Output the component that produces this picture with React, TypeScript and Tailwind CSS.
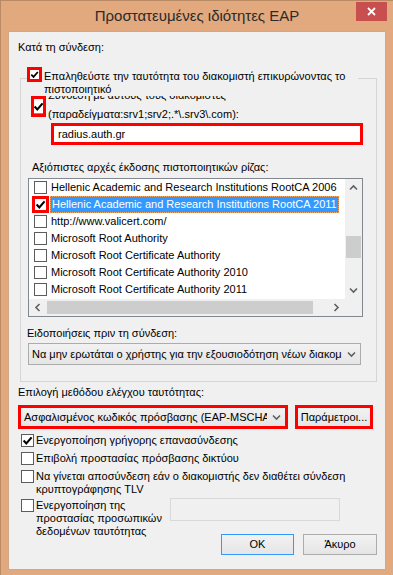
import React from 'react'

const Check = () => (
  <svg width="11" height="11" viewBox="0 0 11 11" className="block">
    <path d="M1.6 5.6 L4.3 8.4 L9.6 2.4" fill="none" stroke="#000" strokeWidth="2.1" />
  </svg>
)

const Chevron = ({ dir = 'down' }: { dir?: 'down' | 'up' | 'left' | 'right' }) => {
  const d = {
    down: 'M1 2.5 L4.5 6 L8 2.5',
    up: 'M1 6.5 L4.5 3 L8 6.5',
    left: 'M6.5 1 L3 4.5 L6.5 8',
    right: 'M2.5 1 L6 4.5 L2.5 8',
  }[dir]
  return (
    <svg width="9" height="9" viewBox="0 0 9 9" className="block">
      <path d={d} fill="none" stroke="#606060" strokeWidth="1.6" />
    </svg>
  )
}

const Box = ({ checked }: { checked?: boolean }) => (
  <span className="flex h-[13px] w-[13px] shrink-0 items-center justify-center border border-[#5c5c5c] bg-white">
    {checked && <Check />}
  </span>
)

const certs = [
  'Hellenic Academic and Research Institutions RootCA 2006',
  'Hellenic Academic and Research Institutions RootCA 2011',
  'http://www.valicert.com/',
  'Microsoft Root Authority',
  'Microsoft Root Certificate Authority',
  'Microsoft Root Certificate Authority 2010',
  'Microsoft Root Certificate Authority 2011',
]

const App = () => {
  return (
    <div className="flex h-[575px] w-[393px] flex-col overflow-hidden border-l border-t border-[#b98a64] bg-[#e2a87e] font-['Liberation_Sans',Arial,sans-serif] text-[11px] leading-[13px] text-black">
      {/* Title bar */}
      <div className="grid h-[30px] shrink-0 grid-cols-[1fr_auto_1fr]">
        <div />
        <div className="pt-[6px] text-[15px] leading-[18px] text-[#2b2b2b]">Προστατευμένες ιδιότητες EAP</div>
        <div className="flex justify-end pr-[6px] pt-[1px]">
          <div className="flex h-[19px] w-[31px] items-center justify-center bg-[#c7504f]">
            <svg width="9" height="9" viewBox="0 0 9 9">
              <path d="M1 1 L8 8 M8 1 L1 8" stroke="#fff" strokeWidth="1.8" />
            </svg>
          </div>
        </div>
      </div>

      {/* Content */}
      <div className="mx-[7px] h-[539px] shrink-0 border border-[#cfa888] bg-[#f0f0f0]">
        <div className="ml-[9px] mt-[9px]">Κατά τη σύνδεση:</div>

        {/* Group box */}
        <div className="ml-[11px] mt-[24px] h-[304px] w-[357px] border border-[#d5d5d5]">
          <div className="-mt-[12px] ml-[6px] flex w-[331px] items-start bg-[#f0f0f0]">
            <span className="flex h-[15px] w-[15px] shrink-0 items-center justify-center border-[3px] border-[#ff0000] bg-white">
              <Check />
            </span>
            <div className="ml-[2px] pt-[3px]">
              Επαληθεύστε την ταυτότητα του διακομιστή επικυρώνοντας το
              <br />
              πιστοποιητικό
            </div>
          </div>

          <div className="ml-[10px] flex items-start">
            <span className="flex h-[21px] w-[15px] shrink-0 flex-col items-center justify-end border-[3px] border-[#ff0000] bg-white">
              <span className="mb-[1px]">
                <Check />
              </span>
              <span className="h-[1px] w-full bg-[#8a8a8a]" />
            </span>
            <div className="ml-[2px]">
              <div className="h-[6px] overflow-hidden">
                <div className="-mt-[7px] whitespace-nowrap">Σύνδεση με αυτούς τους διακομιστές</div>
              </div>
              <div className="mt-[6px]">(παραδείγματα:srv1;srv2;.*\.srv3\.com):</div>
            </div>
          </div>

          <div className="ml-[30px] mt-[2px] flex h-[22px] w-[312px] items-center border-[3px] border-[#ff0000] bg-white pl-[4px]">
            radius.auth.gr
          </div>

          <div className="ml-[11px] mt-[16px]">Αξιόπιστες αρχές έκδοσης πιστοποιητικών ρίζας:</div>

          {/* Certificate list */}
          <div className="ml-[7px] mt-[4px] flex h-[139px] w-[335px] flex-col border border-[#828790] bg-white">
            <div className="flex h-[120px]">
              <div className="flex-1 overflow-hidden">
                {certs.map((c, i) => (
                  <div key={c} className="flex h-[17px] items-center pl-[5px]">
                    {i === 1 ? (
                      <span className="relative">
                        <Box checked />
                        <span className="absolute -inset-[2px] border-[3px] border-[#ff0000]" />
                      </span>
                    ) : (
                      <Box />
                    )}
                    <span
                      className={
                        i === 1
                          ? 'ml-[3px] whitespace-nowrap border border-dotted border-[#f2a864] bg-[#3399ff] px-[1px] leading-[15px] text-white'
                          : 'ml-[4px] whitespace-nowrap'
                      }
                    >
                      {c}
                    </span>
                  </div>
                ))}
              </div>
              <div className="flex w-[17px] flex-col bg-[#f0f0f0]">
                <div className="flex h-[17px] items-center justify-center">
                  <Chevron dir="up" />
                </div>
                <div className="mx-[1px] mt-[40px] h-[22px] bg-[#cdcdcd]" />
                <div className="flex-1" />
                <div className="flex h-[17px] items-center justify-center">
                  <Chevron dir="down" />
                </div>
              </div>
            </div>
            <div className="flex h-[17px] bg-[#f0f0f0]">
              <div className="flex w-[17px] items-center justify-center">
                <Chevron dir="left" />
              </div>
              <div className="my-[2px] ml-[1px] w-[266px] bg-[#cdcdcd]" />
              <div className="flex-1" />
              <div className="flex w-[17px] items-center justify-center">
                <Chevron dir="right" />
              </div>
              <div className="w-[17px]" />
            </div>
          </div>

          <div className="ml-[6px] mt-[10px]">Ειδοποιήσεις πριν τη σύνδεση:</div>
          <div className="ml-[7px] mt-[3px] flex h-[22px] w-[333px] items-center border border-[#acacac] bg-linear-to-b from-[#f2f2f2] to-[#e5e5e5]">
            <div className="flex-1 overflow-hidden whitespace-nowrap pl-[3px]">
              Να μην ερωτάται ο χρήστης για την εξουσιοδότηση νέων διακομιστών ή αξιόπιστων CA
            </div>
            <div className="flex w-[18px] shrink-0 items-center justify-center">
              <Chevron dir="down" />
            </div>
          </div>
        </div>

        <div className="ml-[9px] mt-[4px]">Επιλογή μεθόδου ελέγχου ταυτότητας:</div>
        <div className="ml-[9px] mt-[6px] flex gap-[7px]">
          <div className="flex h-[24px] w-[270px] items-center border-[3px] border-[#ff0000] bg-linear-to-b from-[#f2f2f2] to-[#e5e5e5]">
            <div className="flex-1 overflow-hidden whitespace-nowrap pl-[3px]">
              Ασφαλισμένος κωδικός πρόσβασης (EAP-MSCHAP v2)
            </div>
            <div className="flex w-[18px] shrink-0 items-center justify-center">
              <Chevron dir="down" />
            </div>
          </div>
          <div className="flex h-[24px] w-[78px] items-center justify-center border-[3px] border-[#ff0000] bg-linear-to-b from-[#f2f2f2] to-[#e5e5e5]">
            Παράμετροι...
          </div>
        </div>

        <div className="ml-[12px] mt-[5px] flex flex-col">
          <div className="flex items-start gap-[2px]">
            <Box checked />
            <span>Ενεργοποίηση γρήγορης επανασύνδεσης</span>
          </div>
          <div className="mt-[5px] flex items-start gap-[2px]">
            <Box />
            <span>Επιβολή προστασίας πρόσβασης δικτύου</span>
          </div>
          <div className="mt-[5px] flex items-start gap-[2px]">
            <Box />
            <span>
              Να γίνεται αποσύνδεση εάν ο διακομιστής δεν διαθέτει σύνδεση
              <br />
              κρυπτογράφησης TLV
            </span>
          </div>
          <div className="mt-[3px] flex items-start">
            <div className="flex w-[149px] items-start gap-[2px]">
              <Box />
              <span>
                Ενεργοποίηση της
                <br />
                προστασίας προσωπικών
                <br />
                δεδομένων ταυτότητας
              </span>
            </div>
            <div className="-mt-[1px] flex flex-col">
              <div className="h-[23px] w-[170px] border border-[#d9d9d9] bg-[#f0f0f0]" />
              <div className="mt-[13px] flex gap-[9px] pl-[51px]">
                <div className="flex h-[21px] w-[73px] items-center justify-center border border-[#3399ff] bg-linear-to-b from-[#f2f2f2] to-[#e5e5e5]">
                  OK
                </div>
                <div className="flex h-[21px] w-[74px] items-center justify-center border border-[#acacac] bg-linear-to-b from-[#f2f2f2] to-[#e5e5e5]">
                  Άκυρο
                </div>
              </div>
            </div>
          </div>
        </div>
      </div>
    </div>
  )
}

export default App
